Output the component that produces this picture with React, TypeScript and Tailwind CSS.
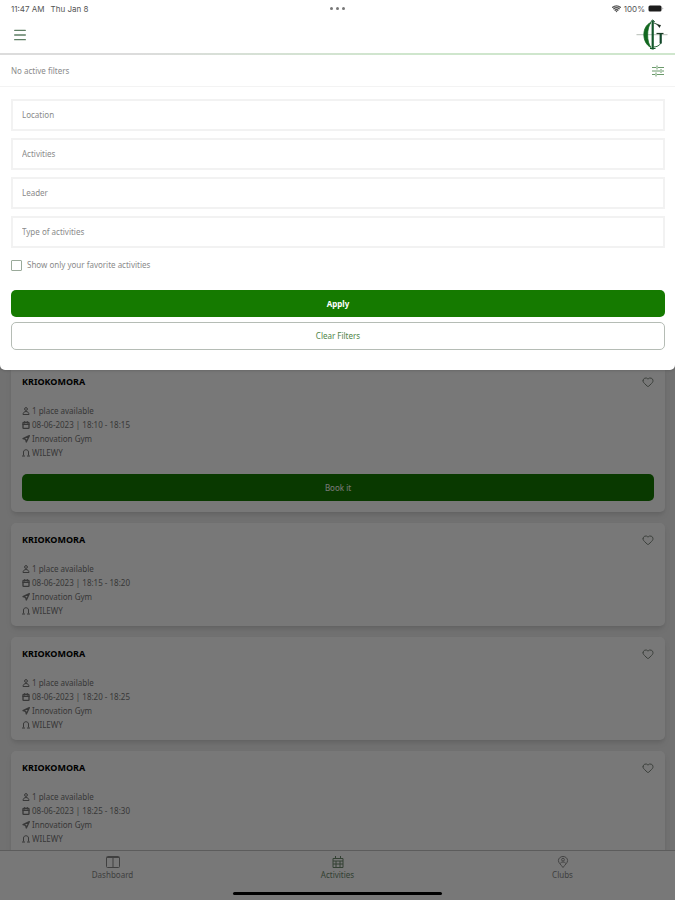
import { useState } from "react";
import { Calendar, Heart, Menu, Navigation, Wifi } from "lucide-react";

/* ─── Types ─── */

interface Activity {
  id: number;
  name: string;
  places: string;
  time: string;
  club: string;
  leader: string;
  bookable?: boolean;
}

/* ─── Data ─── */

const ACTIVITIES: Activity[] = [
  { id: 1, name: "KRIOKOMORA", places: "1 place available", time: "08-06-2023 | 18:10 - 18:15", club: "Innovation Gym", leader: "WILEWY", bookable: true },
  { id: 2, name: "KRIOKOMORA", places: "1 place available", time: "08-06-2023 | 18:15 - 18:20", club: "Innovation Gym", leader: "WILEWY" },
  { id: 3, name: "KRIOKOMORA", places: "1 place available", time: "08-06-2023 | 18:20 - 18:25", club: "Innovation Gym", leader: "WILEWY" },
  { id: 4, name: "KRIOKOMORA", places: "1 place available", time: "08-06-2023 | 18:25 - 18:30", club: "Innovation Gym", leader: "WILEWY" },
];

const FIELDS = ["Location", "Activities", "Leader", "Type of activities"];

/* ─── Icons ─── */

function Logo() {
  return (
    <svg viewBox="0 0 32 32" className="h-8 w-8" fill="none" aria-hidden="true">
      <path d="M0.500 15.700h31" stroke="#a3aca3" strokeWidth="0.8" />
      <path d="M15 3.500C5.500 7 5.500 24 15 28.500C10.500 23 10.500 9 15 3.500Z" fill="#12671f" stroke="#12671f" strokeWidth="0.8" />
      <path d="M16.700 1.500v29" stroke="#12572a" strokeWidth="2.200" />
      <path d="M14.500 3l2.200-2 2.200 2M14 29.500h5.500" stroke="#12572a" strokeWidth="1" />
      <path d="M17.500 4c2 0 3.500 1.500 5.500 2.500" stroke="#3a5a42" strokeWidth="1.200" />
      <path d="M21 5.500l4 0.500-1.500 3z" fill="#1b2a1f" />
      <path d="M17.500 28c3.500 0 6-1.500 7.500-4" stroke="#2c6a3c" strokeWidth="1" />
      <path d="M20.500 14.500h7" stroke="#1d3a24" strokeWidth="1.200" />
      <path d="M24.700 14.500v10" stroke="#12472a" strokeWidth="2.200" />
    </svg>
  );
}

function BatteryIcon() {
  return (
    <svg viewBox="0 0 16 7" className="h-[7px] w-4" aria-hidden="true">
      <rect x="0.500" y="0.500" width="13" height="6" rx="1.500" fill="#1c1c1c" />
      <path d="M14.500 2.500c1 0.300 1 1.700 0 2z" fill="#888" />
    </svg>
  );
}

function FilterIcon() {
  return (
    <svg viewBox="0 0 14 14" className="h-3.5 w-3.5" fill="none" stroke="#6a9a6a" strokeWidth="1" aria-hidden="true">
      <path d="M1 3.500h4M7 3.500h6M1 7h8M11 7h2M1 10.500h3M6 10.500h7" />
      <path d="M6 1.500v4M10 5v4M5 8.500v4" />
    </svg>
  );
}

function PersonIcon() {
  return (
    <svg viewBox="0 0 8 8" className="h-2 w-2" fill="none" stroke="currentColor" aria-hidden="true">
      <circle cx="4" cy="2" r="1.400" />
      <path d="M1 7.500c0-4 6-4 6 0z" />
    </svg>
  );
}

function LeaderIcon() {
  return (
    <svg viewBox="0 0 8 8" className="h-2 w-2" fill="none" stroke="currentColor" aria-hidden="true">
      <path d="M1.500 6.500V3c0-3 5-3 5 0v3.500M0 7h3M5 7h3" />
    </svg>
  );
}

function DashboardIcon() {
  return (
    <svg viewBox="0 0 14 12" className="h-3 w-3.5" fill="none" stroke="currentColor" aria-hidden="true">
      <rect x="0.500" y="0.500" width="13" height="11" rx="1" />
      <path d="M7 1v10M1 1.500h12" />
    </svg>
  );
}

function ActivitiesIcon() {
  return (
    <svg viewBox="0 0 12 12" className="h-3 w-3.5" fill="none" stroke="currentColor" aria-hidden="true">
      <path d="M1 2.500h10v9H1zM1 5h10M1 8h10M4 5v6M8 5v6M3.500 0v3M8.500 0v3" />
    </svg>
  );
}

function ClubsIcon() {
  return (
    <svg viewBox="0 0 12 13" className="h-3 w-3.5" fill="none" stroke="currentColor" aria-hidden="true">
      <path d="M6 12.500C4 9.500 1 7.500 1 5a5 4.500 0 0 1 10 0c0 2.500-3 4.500-5 7.500z" />
      <circle cx="6" cy="4" r="1.500" />
      <path d="M3 8c1-2 5-2 6 0" />
    </svg>
  );
}

const TABS = [
  { label: "Dashboard", icon: DashboardIcon, active: false },
  { label: "Activities", icon: ActivitiesIcon, active: true },
  { label: "Clubs", icon: ClubsIcon, active: false },
];

/* ─── Sections ─── */

function StatusBar() {
  return (
    <div className="grid h-[17px] grid-cols-3 items-center px-[11px] font-[Inter] text-[8px] text-[#555]">
      <div className="flex gap-1.5">
        <span>11:47 AM</span>
        <span>Thu Jan 8</span>
      </div>
      <div className="flex justify-center gap-[3px]">
        <span className="h-[3px] w-[3px] rounded-full bg-[#777]" />
        <span className="h-[3px] w-[3px] rounded-full bg-[#777]" />
        <span className="h-[3px] w-[3px] rounded-full bg-[#777]" />
      </div>
      <div className="flex items-center justify-end gap-[3px]">
        <Wifi className="h-[9px] w-[9px]" strokeWidth={4} />
        <span>100%</span>
        <BatteryIcon />
      </div>
    </div>
  );
}

function FilterSheet() {
  const [onlyFavorites, setOnlyFavorites] = useState(false);

  return (
    <section className="relative z-20 shrink-0 rounded-b-[5px] bg-white shadow-sm" aria-label="Filters">
      <StatusBar />

      <header className="flex h-9 items-center justify-between pr-[7px] pl-3">
        <button type="button" aria-label="Open menu">
          <Menu className="h-4 w-4 text-[#5f7f65]" />
        </button>
        <Logo />
      </header>
      <div className="h-0.5 bg-linear-to-r from-[#dcdcdc] from-20% to-[#cfe6cd] to-60%" />

      <div className="flex h-8 items-center justify-between border-b border-[#f3f3f3] pr-[10px] pl-[11px]">
        <span className="text-[#8a8a8a]">No active filters</span>
        <button type="button" aria-label="Toggle filters">
          <FilterIcon />
        </button>
      </div>

      <form className="flex flex-col pt-3 pr-[10px] pb-5 pl-[11px]" onSubmit={(e) => e.preventDefault()}>
        <div className="flex flex-col gap-[7px]">
          {FIELDS.map((field) => (
            <input
              key={field}
              type="text"
              aria-label={field}
              placeholder={field}
              className="h-8 w-full border-2 border-[#f2f2f2] px-[9px] pb-0.5 text-[#777] placeholder:text-[#8a8a8a] focus:border-[#157a00] focus:outline-none"
            />
          ))}
        </div>

        <label className="mt-[9px] flex h-4 items-center gap-[5px] text-[#8a8a8a]">
          <input
            type="checkbox"
            checked={onlyFavorites}
            onChange={(e) => setOnlyFavorites(e.target.checked)}
            className="h-[11px] w-[11px] appearance-none rounded-[1px] border border-[#9aaa9a] checked:bg-[#157a00]"
          />
          Show only your favorite activities
        </label>

        <button type="submit" className="mt-[17px] h-[27px] rounded-[5px] bg-[#157a00] font-bold text-white">
          Apply
        </button>
        <button type="reset" className="mt-[5px] h-7 rounded-[5px] border border-[#b5bcb5] text-[#4f8549]">
          Clear Filters
        </button>
      </form>
    </section>
  );
}

function ActivityCard({ activity }: { activity: Activity }) {
  return (
    <article className="shrink-0 rounded-[5px] bg-white px-[11px] pt-[10px] pb-2 shadow-md">
      <div className="flex h-3.5 items-center justify-between">
        <h2 className="text-[9px] font-bold text-black">{activity.name}</h2>
        <button type="button" aria-label="Add to favorites">
          <Heart className="h-3 w-3 text-[#7c857c]" />
        </button>
      </div>
      <ul className="mt-[15px] leading-[14px] text-[#777]">
        <li className="flex items-center gap-0.5">
          <PersonIcon />
          {activity.places}
        </li>
        <li className="flex items-center gap-0.5">
          <Calendar className="h-2 w-2" strokeWidth={4} />
          {activity.time}
        </li>
        <li className="flex items-center gap-0.5">
          <Navigation className="h-2 w-2" strokeWidth={4} />
          {activity.club}
        </li>
        <li className="flex items-center gap-0.5">
          <LeaderIcon />
          {activity.leader}
        </li>
      </ul>
      {activity.bookable && (
        <button type="button" className="mt-3.5 mb-[3px] h-[27px] w-full rounded-[5px] bg-[#157a00] text-white">
          Book it
        </button>
      )}
    </article>
  );
}

function TabBar() {
  return (
    <nav className="shrink-0 border-t border-[#c4c4c4] bg-white" aria-label="Main">
      <div className="grid h-[33px] grid-cols-3 pt-[5px]">
        {TABS.map(({ label, icon: Icon, active }) => (
          <a
            key={label}
            href="#"
            className={`flex flex-col items-center leading-[14px] ${active ? "text-[#6c8a6c]" : "text-[#888]"}`}
          >
            <Icon />
            {label}
          </a>
        ))}
      </div>
      <div className="flex h-4 justify-center pt-2">
        <span className="h-[3px] w-[31%] rounded-full bg-black" />
      </div>
    </nav>
  );
}

/* ─── Main Component ─── */

export default function App() {
  return (
    <div className="relative flex h-screen flex-col overflow-hidden bg-[#f0f0f0] font-['Noto_Sans',sans-serif] text-[8px]">
      <FilterSheet />

      <main className="-mt-[5px] flex min-h-0 flex-1 flex-col gap-[11px] overflow-hidden pr-[10px] pl-[11px]">
        {ACTIVITIES.map((activity) => (
          <ActivityCard key={activity.id} activity={activity} />
        ))}
      </main>

      <TabBar />

      {/* Backdrop behind the open filter sheet */}
      <div className="absolute inset-0 z-10 bg-black/53" />
    </div>
  );
}
